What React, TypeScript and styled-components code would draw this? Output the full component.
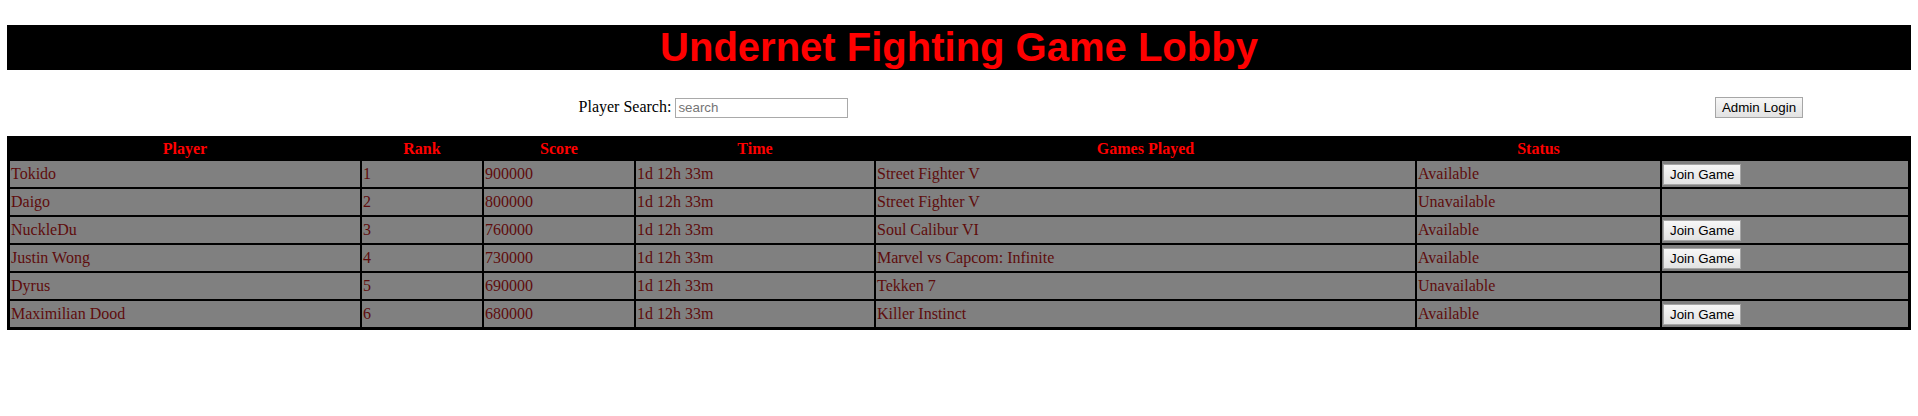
import React from "react";
import styled, { createGlobalStyle } from "styled-components";

const GlobalStyle = createGlobalStyle`
  html, body {
    margin: 0;
    padding: 0;
    background: #ffffff;
  }
  body {
    font-family: "Liberation Serif", "Times New Roman", serif;
    font-size: 16px;
    color: #000;
  }
`;

const Page = styled.div`
  padding: 25px 7px 0;
`;

const TitleBar = styled.h1`
  margin: 0;
  background: #000;
  color: #ff0000;
  font-family: "Liberation Sans", Arial, sans-serif;
  font-weight: bold;
  font-size: 40px;
  line-height: 45px;
  text-align: center;
`;

const Toolbar = styled.div`
  display: grid;
  grid-template-columns: 1413px 1fr 304px;
  align-items: center;
  height: 22px;
  margin-top: 26px;
  margin-bottom: 18px;
`;

const SearchArea = styled.div`
  text-align: center;
  font-family: "Liberation Serif", "Times New Roman", serif;
  font-size: 16px;
  line-height: 22px;
`;

const SearchInput = styled.input`
  box-sizing: border-box;
  width: 173px;
  height: 20px;
  margin: 0 0 0 4px;
  padding: 1px 2px;
  border: 1px solid #a9a9a9;
  background: #fff;
  font-family: "Liberation Sans", Arial, sans-serif;
  font-size: 13.33px;
  color: #000;
  vertical-align: baseline;
  outline: none;
  &::placeholder {
    color: #757575;
  }
`;

const AdminArea = styled.div`
  display: flex;
  justify-content: center;
`;

const Button = styled.button`
  box-sizing: border-box;
  height: 21px;
  padding: 1px 6px;
  border: 1px solid #a6a6a6;
  border-radius: 0;
  background: linear-gradient(#f7f7f7, #e2e2e2);
  font-family: "Liberation Sans", Arial, sans-serif;
  font-size: 13.33px;
  line-height: 15px;
  color: #000;
  cursor: pointer;
`;

const Table = styled.table`
  width: 100%;
  table-layout: fixed;
  border-collapse: separate;
  border-spacing: 2px;
  border: 1px solid #000;
  background: #000;
`;

const HeadCell = styled.th`
  padding: 1px;
  height: 18px;
  background: #000;
  color: #ff0000;
  font-family: "Liberation Serif", "Times New Roman", serif;
  font-weight: bold;
  font-size: 16px;
  line-height: 18px;
  text-align: center;
`;

const Cell = styled.td`
  padding: 1px;
  height: 24px;
  background: #808080;
  color: #5e0c0c;
  font-family: "Liberation Serif", "Times New Roman", serif;
  font-size: 16px;
  line-height: 18px;
  text-align: left;
  vertical-align: middle;
  white-space: nowrap;
  overflow: hidden;
`;

type Player = {
  name: string;
  rank: number;
  score: number;
  time: string;
  game: string;
  available: boolean;
};

const players: Player[] = [
  { name: "Tokido", rank: 1, score: 900000, time: "1d 12h 33m", game: "Street Fighter V", available: true },
  { name: "Daigo", rank: 2, score: 800000, time: "1d 12h 33m", game: "Street Fighter V", available: false },
  { name: "NuckleDu", rank: 3, score: 760000, time: "1d 12h 33m", game: "Soul Calibur VI", available: true },
  { name: "Justin Wong", rank: 4, score: 730000, time: "1d 12h 33m", game: "Marvel vs Capcom: Infinite", available: true },
  { name: "Dyrus", rank: 5, score: 690000, time: "1d 12h 33m", game: "Tekken 7", available: false },
  { name: "Maximilian Dood", rank: 6, score: 680000, time: "1d 12h 33m", game: "Killer Instinct", available: true },
];

const columns = [
  { label: "Player", width: 350 },
  { label: "Rank", width: 120 },
  { label: "Score", width: 150 },
  { label: "Time", width: 238 },
  { label: "Games Played", width: 539 },
  { label: "Status", width: 243 },
  { label: "", width: 246 },
];

export default function App() {
  return (
    <>
      <GlobalStyle />
      <Page>
        <TitleBar>Undernet Fighting Game Lobby</TitleBar>
        <Toolbar>
          <SearchArea>
            Player Search:<SearchInput type="text" placeholder="search" />
          </SearchArea>
          <div />
          <AdminArea>
            <Button type="button">Admin Login</Button>
          </AdminArea>
        </Toolbar>
        <Table>
          <colgroup>
            {columns.map((c, i) => (
              <col key={i} style={{ width: c.width }} />
            ))}
          </colgroup>
          <thead>
            <tr>
              {columns.map((c, i) => (
                <HeadCell key={i}>{c.label}</HeadCell>
              ))}
            </tr>
          </thead>
          <tbody>
            {players.map((p) => (
              <tr key={p.name}>
                <Cell>{p.name}</Cell>
                <Cell>{p.rank}</Cell>
                <Cell>{p.score}</Cell>
                <Cell>{p.time}</Cell>
                <Cell>{p.game}</Cell>
                <Cell>{p.available ? "Available" : "Unavailable"}</Cell>
                <Cell>{p.available ? <Button type="button">Join Game</Button> : null}</Cell>
              </tr>
            ))}
          </tbody>
        </Table>
      </Page>
    </>
  );
}
